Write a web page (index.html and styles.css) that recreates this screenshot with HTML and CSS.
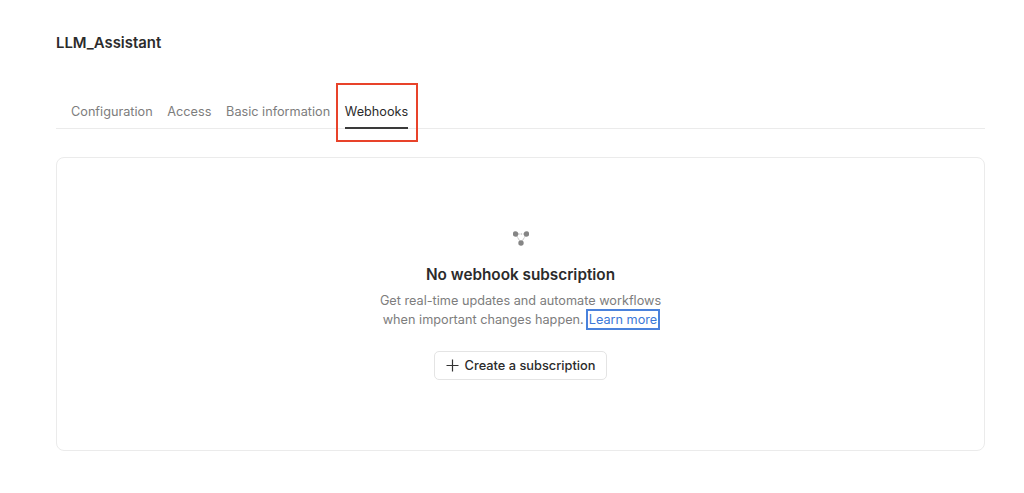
FILE: index.html
```html
<!DOCTYPE html>
<html lang="en">
<head>
    <meta charset="UTF-8">
    <title>LLM_Assistant</title>
    <link rel="stylesheet" href="styles.css">
</head>
<body>
    <div class="container">
        <h1>LLM_Assistant</h1>

        <nav class="tabs">
            <a class="tab">Configuration</a>
            <a class="tab">Access</a>
            <a class="tab">Basic information</a>
            <a class="tab tab-active">Webhooks
                <span class="highlight"></span>
            </a>
        </nav>

        <div class="card">
            <svg class="empty-icon" width="16" height="16" viewBox="0 0 16 16">
                <path d="M2.5 4 L13.5 4 M2.5 4 L8 13 M13.5 4 L8 13" fill="none" stroke="#8f8f8f" stroke-width="0.8" stroke-dasharray="1.4 1.2"/>
                <circle cx="2.5" cy="4" r="2.7" fill="#858585"/>
                <circle cx="13.5" cy="4" r="2.7" fill="#858585"/>
                <circle cx="8" cy="13" r="2.7" fill="#858585"/>
            </svg>
            <h2>No webhook subscription</h2>
            <p class="description">Get real-time updates and automate workflows<br>when important changes happen.<a class="learn-more">Learn more</a></p>
            <button type="button" class="btn">
                <svg width="13" height="13" viewBox="0 0 13 13">
                    <path d="M6.5 0.5 V12.5 M0.5 6.5 H12.5" fill="none" stroke="#333" stroke-width="1.2"/>
                </svg>
                Create a subscription
            </button>
        </div>
    </div>
</body>
</html>
```

FILE: styles.css
```css
body {
    font-family: Inter, "Liberation Sans", sans-serif;
    margin: 0;
    background-color: #ffffff;
    color: #2b2b2b;
}
.container {
    padding: 35px 39px 0 56px;
}
h1 {
    font-size: 14.9px;
    line-height: 17px;
    font-weight: 600;
    margin: 0 0 30px;
}
.tabs {
    display: flex;
    gap: 14.7px;
    height: 46px;
    padding-left: 15px;
    border-bottom: 1px solid #ebebeb;
    font-size: 12.7px;
    line-height: 16px;
}
.tab {
    position: relative;
    padding-top: 22px;
    color: #7d7d7d;
    white-space: nowrap;
}
.tab-active {
    color: #2b2b2b;
    border-bottom: 2px solid #3a3a3a;
    height: 23px;
}
.highlight {
    position: absolute;
    left: -9px;
    right: -10px;
    top: 1px;
    height: 59px;
    box-sizing: border-box;
    border: 2px solid #e8432a;
}
.card {
    display: flex;
    flex-direction: column;
    align-items: center;
    box-sizing: border-box;
    height: 294px;
    margin-top: 28px;
    padding-top: 72px;
    border: 1px solid #ebebeb;
    border-radius: 8px;
}
.empty-icon {
    display: block;
}
h2 {
    font-size: 15.3px;
    line-height: 20px;
    font-weight: 600;
    margin: 19px 0 6px;
}
.description {
    font-size: 12.7px;
    line-height: 19px;
    color: #7d7d7d;
    text-align: center;
    margin: 0 0 22px;
}
.learn-more {
    color: #3b78d8;
    outline: 2px solid #4a82dc;
    padding: 1px;
    margin-left: 4px;
}
.btn {
    display: flex;
    align-items: center;
    gap: 6px;
    height: 29px;
    padding: 0 11px 0 11px;
    background-color: #ffffff;
    border: 1px solid #e4e4e4;
    border-radius: 5px;
    font-family: inherit;
    font-size: 12.8px;
    font-weight: 500;
    color: #2b2b2b;
}
```
